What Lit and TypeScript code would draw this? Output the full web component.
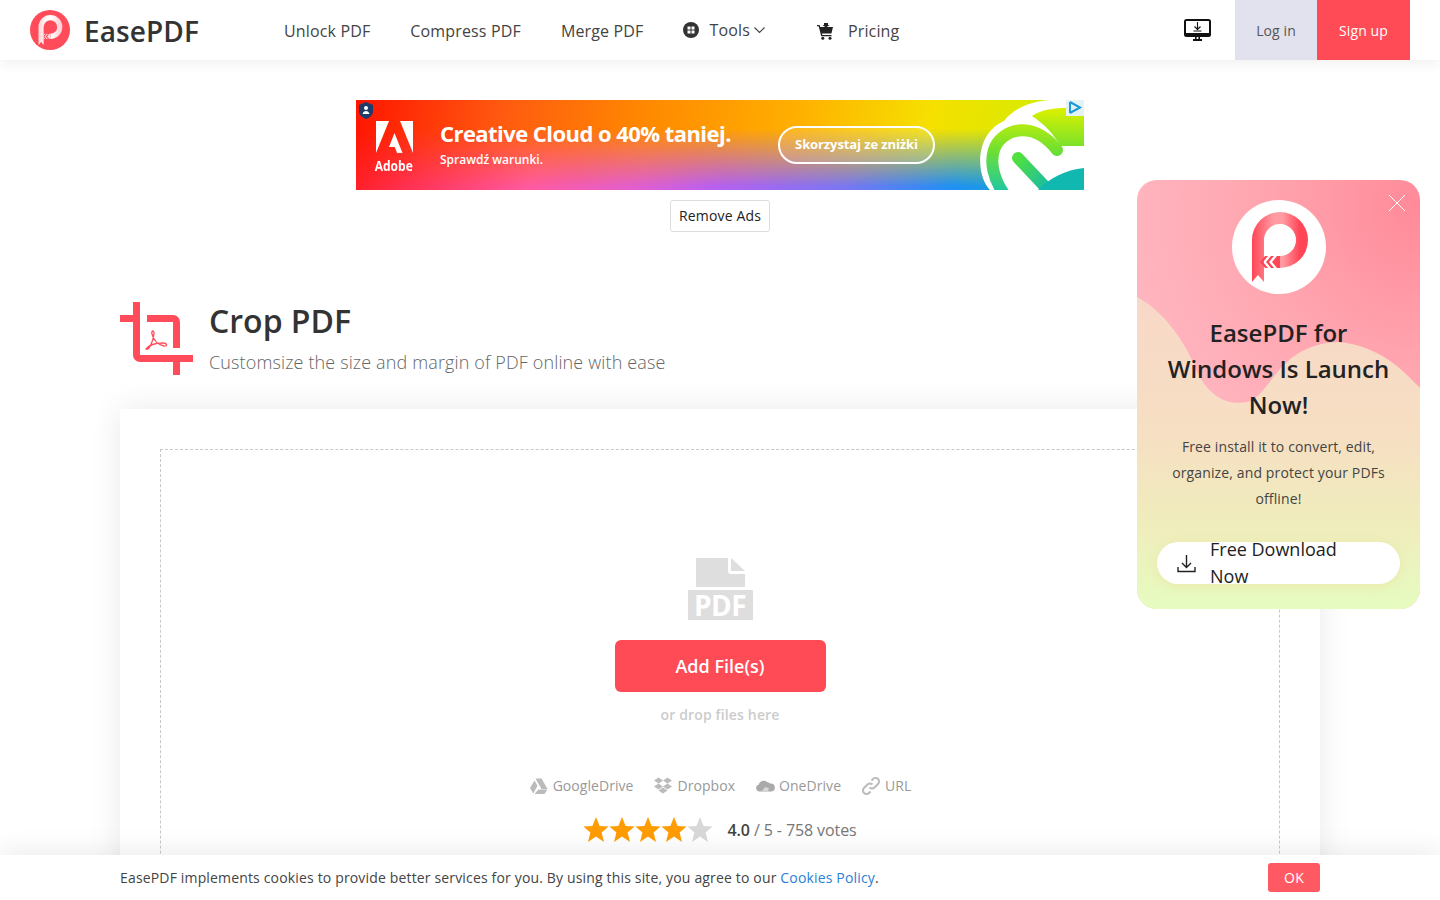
import { LitElement, css, html, svg } from 'lit';
import { customElement } from 'lit/decorators.js';

const logoMark = (id: string, light: string, dark: string) => svg`
  <defs>
    <linearGradient id=${id} x1="0" y1="0" x2="1" y2="0">
      <stop offset="0" stop-color=${dark} />
      <stop offset=".38" stop-color=${light} />
      <stop offset=".55" stop-color=${light} />
      <stop offset=".85" stop-color=${dark} />
    </linearGradient>
  </defs>
  <path fill="url(#${id})" d="M20 40A28 28 0 1 1 48 68V56A16 16 0 1 0 32 40V82L26 75L20 82Z" />
  <path fill=${dark} d="M48 56v12h-3l-5-6 5-6zM39 56l-5 6 5 6h3l-5-6 5-6zM33 56l-5 6 5 6h3l-5-6 5-6z" />
`;

const star = (color: string) => html`
  <svg class="star" viewBox="0 0 26 26"><polygon fill=${color} points="13,0 16.6,9 25.6,9.4 18.6,15.4 21,25 13,19.6 5,25 7.4,15.4 0.4,9.4 9.4,9" /></svg>
`;

@customElement('app-root')
export class AppRoot extends LitElement {
  static styles = css`
    :host {
      display: block;
      position: relative;
      height: 100vh;
      overflow: hidden;
      background: #fff;
      font-family: "Open Sans", "Liberation Sans", sans-serif;
      color: #444;
    }

    header {
      position: relative;
      z-index: 2;
      display: flex;
      align-items: center;
      height: 60px;
      padding: 0 30px;
      background: #fff;
      box-shadow: 0 2px 14px rgba(0, 0, 0, .07);
    }
    .brand { display: flex; align-items: center; gap: 14px; width: 254px; }
    .brand svg { width: 40px; height: 40px; display: block; }
    .brand span { font-size: 28px; font-weight: 600; color: #333; line-height: 40px; padding-top: 2px; letter-spacing: .1px; }
    nav { display: flex; align-items: center; font-size: 16px; letter-spacing: .15px; color: #444; flex: 1; padding-top: 2px; }
    nav a { display: flex; align-items: center; line-height: 24px; }
    nav a + a { margin-left: 40px; }
    .tools { gap: 10px; margin-top: -2px; }
    .tools svg.globe { width: 16px; height: 16px; }
    .tools span { display: flex; align-items: center; gap: 3px; }
    .tools svg.chev { width: 13px; height: 8px; }
    .pricing { margin-left: 51px !important; gap: 14px; }
    .pricing svg { width: 17px; height: 17px; }
    .monitor { width: 27px; height: 22px; margin-right: 24px; display: block; }
    .auth {
      display: flex;
      align-items: center;
      justify-content: center;
      height: 60px;
      font-size: 14px;
      letter-spacing: .1px;
    }
    .login { width: 82px; background: #e2e2ee; color: #555; }
    .signup { width: 93px; background: #ff4b55; color: #fff; }

    main { display: flex; flex-direction: column; align-items: center; padding-top: 40px; }
    .ad {
      position: relative;
      overflow: hidden;
      display: flex;
      align-items: center;
      width: 728px;
      height: 90px;
      flex: none;
      color: #fff;
      background: linear-gradient(97deg, #ff1c20 0%, #ff3050 8%, #ff5ba0 25%, #e05fd0 40%, #b860f0 50%, #7878f0 68%, #2090f4 82%, #0cb4b8 100%);
    }
    .ad::before {
      content: "";
      position: absolute;
      inset: 0;
      background: linear-gradient(97deg, #ff1500 0%, #ff5a10 20%, #ff8a00 40%, #ffb000 60%, #f6e000 78%, #c8f000 100%);
      -webkit-mask-image: linear-gradient(180deg, #000 32%, transparent 96%);
      mask-image: linear-gradient(180deg, #000 32%, transparent 96%);
    }
    .ad > * { position: relative; }
    .adobe {
      display: flex;
      flex-direction: column;
      align-items: center;
      width: 38px;
      margin: 3px 0 0 19px;
      font-size: 15px;
      font-weight: 700;
      line-height: 16px;
    }
    .adobe span { display: block; transform: scaleX(.8); }
    .adobe svg { width: 37px; height: 32px; display: block; margin-bottom: 4px; }
    .ad-copy { margin-left: 27px; width: 338px; margin-top: -2px; }
    .ad-copy b { display: block; font-size: 22px; font-weight: 700; line-height: 30px; letter-spacing: -.55px; }
    .ad-copy span { display: block; font-size: 12px; font-weight: 600; line-height: 20px; margin-top: 2px; }
    .ad-cta {
      display: flex;
      align-items: center;
      justify-content: center;
      width: 157px;
      height: 38px;
      box-sizing: border-box;
      padding-bottom: 2px;
      border: 2px solid #fff;
      border-radius: 19px;
      background: rgba(255, 255, 255, .12);
      font-size: 13px;
      font-weight: 700;
      letter-spacing: -.1px;
    }
    .ad-cloud { position: absolute; right: 0; top: 0; width: 124px; height: 90px; }
    .ad-shield { position: absolute; left: 3px; top: 2px; width: 14px; height: 17px; }
    .ad-choice { position: absolute; right: 0; top: 0; width: 18px; height: 16px; }

    .remove {
      margin-top: 10px;
      width: 100px;
      height: 32px;
      box-sizing: border-box;
      padding-bottom: 2px;
      display: flex;
      align-items: center;
      justify-content: center;
      border: 1px solid #ddd;
      border-radius: 3px;
      font-size: 14px;
      letter-spacing: .15px;
      color: #222;
    }

    .heading {
      align-self: stretch;
      display: flex;
      gap: 16px;
      margin: 70px 120px 34px;
      height: 73px;
    }
    .heading svg { width: 73px; height: 73px; flex: none; }
    h1 { margin: -1px 0 0; font-size: 32px; font-weight: 600; color: #333; line-height: 40px; }
    .heading p { margin: 9px 0 0; font-size: 18px; font-weight: 300; letter-spacing: .13px; color: #666; line-height: 24px; }

    .card {
      width: 1200px;
      box-sizing: border-box;
      padding: 40px;
      background: #fff;
      box-shadow: 0 0 30px rgba(0, 0, 0, .09);
      flex: none;
    }
    .drop {
      display: flex;
      flex-direction: column;
      align-items: center;
      height: 500px;
      padding-top: 108px;
      box-sizing: border-box;
      border: 1px dashed #c8c8c8;
    }
    .pdf { display: flex; flex-direction: column; align-items: center; width: 65px; }
    .pdf svg { width: 49px; height: 29px; display: block; margin-left: 1px; }
    .pdf span {
      display: block;
      width: 65px;
      height: 30px;
      margin-top: 3px;
      background: #dedede;
      color: #fff;
      font-size: 28px;
      font-weight: 700;
      line-height: 30px;
      text-align: center;
      letter-spacing: -.5px;
    }
    .add {
      display: flex;
      align-items: center;
      justify-content: center;
      width: 211px;
      height: 52px;
      margin-top: 20px;
      background: #ff4b55;
      border-radius: 6px;
      color: #fff;
      font-size: 18px;
      font-weight: 600;
    }
    .hint { margin-top: 12px; font-size: 14px; font-weight: 600; letter-spacing: .15px; line-height: 22px; color: #ccc; }
    .sources { display: flex; gap: 20px; margin-top: 50px; font-size: 14px; letter-spacing: .05px; line-height: 20px; color: #999; }
    .sources div { display: flex; align-items: center; gap: 4px; }
    .sources svg { width: 20px; height: 20px; display: block; }
    .rating { display: flex; align-items: center; gap: 14px; margin-top: 20px; height: 27px; font-size: 16px; letter-spacing: -.1px; color: #777; }
    .rating b { font-weight: 600; color: #444; }
    .stars { display: flex; }
    .star { width: 26px; height: 26px; display: block; }

    .cookie {
      position: absolute;
      z-index: 3;
      left: 0;
      right: 0;
      bottom: 0;
      height: 45px;
      padding: 0 120px;
      display: flex;
      align-items: center;
      justify-content: space-between;
      background: #fff;
      box-shadow: 0 0 30px rgba(0, 0, 0, .1);
      font-size: 14px;
      letter-spacing: .16px;
      color: #444;
    }
    .cookie a { color: #2b7fd4; }
    .ok {
      width: 52px;
      height: 29px;
      display: flex;
      align-items: center;
      justify-content: center;
      background: #ff5a64;
      border-radius: 3px;
      color: #fff;
    }

    .promo {
      position: absolute;
      z-index: 4;
      left: 1137px;
      top: 180px;
      width: 283px;
      height: 429px;
      box-sizing: border-box;
      padding: 20px 20px 25px;
      overflow: hidden;
      border-radius: 20px;
      display: flex;
      flex-direction: column;
      align-items: center;
      background: radial-gradient(circle 330px at 100% 6%, #ff8a99 0%, #ffa6b0 50%, #ffb9c3 100%), #fdbfc2;
    }
    .hills { position: absolute; left: 0; top: 0; width: 283px; height: 429px; }
    .close { position: absolute; right: 15px; top: 15px; width: 16px; height: 16px; }
    .promo-logo { position: relative; width: 94px; height: 94px; border-radius: 50%; background: #fff; flex: none; }
    .promo-logo svg { display: block; width: 94px; height: 94px; }
    .promo h2 {
      position: relative;
      margin: 21px 0 0;
      font-size: 24px;
      font-weight: 600;
      line-height: 36px;
      text-align: center;
      color: #222;
    }
    .promo p {
      position: relative;
      margin: 11px 0 0;
      font-size: 14px;
      letter-spacing: .13px;
      line-height: 26px;
      text-align: center;
      color: #444;
    }
    .dl {
      position: relative;
      align-self: stretch;
      display: flex;
      align-items: center;
      gap: 14px;
      height: 42px;
      margin-top: 30px;
      padding-left: 20px;
      border-radius: 21px;
      background: #fff;
      box-shadow: 0 2px 10px rgba(240, 220, 150, .5);
      font-size: 18px;
      line-height: 27px;
      color: #222;
    }
    .dl svg { width: 19px; height: 19px; flex: none; }
    .dl span { width: 150px; flex: none; }
  `;

  render() {
    return html`
      <header>
        <div class="brand">
          <svg viewBox="0 0 94 94">
            <circle cx="47" cy="47" r="47" fill="#ff4b5a" />
            ${logoMark('hdr', '#ffffff', '#ffd5d8')}
          </svg>
          <span>EasePDF</span>
        </div>
        <nav>
          <a>Unlock PDF</a>
          <a>Compress PDF</a>
          <a>Merge PDF</a>
          <a class="tools">
            <svg class="globe" viewBox="0 0 16 16">
              <circle cx="8" cy="8" r="8" fill="#333" />
              <path d="M4.5 4.5h3v3h-3zM8.5 4.5h3v3h-3zM4.5 8.5h3v3h-3zM8.5 8.5h3v3h-3z" fill="#fff" />
            </svg>
            <span>Tools
              <svg class="chev" viewBox="0 0 12 8"><path d="M1 1.5l5 5 5-5" fill="none" stroke="#444" stroke-width="1.2" /></svg>
            </span>
          </a>
          <a class="pricing">
            <svg viewBox="0 0 17 17">
              <path fill="#222" d="M0 2h2.6l.7 2H16l-1.6 6.5H5l.3 1.4h9.2v1.3H4.2L1.7 3.3H0z" />
              <path fill="#222" d="M7 0h4v2h1.6L9 4.6 5.4 2H7z" />
              <circle cx="5.8" cy="15.2" r="1.5" fill="#222" />
              <circle cx="13" cy="15.2" r="1.5" fill="#222" />
            </svg>
            Pricing
          </a>
        </nav>
        <svg class="monitor" viewBox="0 0 27 22">
          <rect x="1" y="1" width="25" height="16" rx="1.5" fill="#fff" stroke="#111" stroke-width="2" />
          <rect x="1" y="14" width="25" height="3" fill="#111" />
          <path d="M13.5 3v7M10.5 7.5l3 3 3-3M9.5 12h8" fill="none" stroke="#111" stroke-width="1.1" />
          <path d="M11 17h1.6v3h1.8v-3H16v3h2v2H9v-2h2z" fill="#111" />
        </svg>
        <div class="auth login">Log in</div>
        <div class="auth signup">Sign up</div>
      </header>

      <main>
        <div class="ad">
          <div class="adobe">
            <svg viewBox="0 0 37 32">
              <path fill="#fff" d="M0 0h13L0 32zM24 0h13v32zM18.5 12l8 20h-5.400l-2.300-6h-5.800z" />
            </svg>
            <span>Adobe</span>
          </div>
          <div class="ad-copy">
            <b>Creative Cloud o 40% taniej.</b>
            <span>Sprawdź warunki.</span>
          </div>
          <div class="ad-cta">Skorzystaj ze zniżki</div>
          <svg class="ad-cloud" viewBox="0 0 124 90">
            <defs>
              <linearGradient id="band" gradientUnits="userSpaceOnUse" x1="0" y1="10" x2="0" y2="90">
                <stop offset="0" stop-color="#d8f000" />
                <stop offset=".5" stop-color="#70e030" />
                <stop offset="1" stop-color="#20c8a0" />
              </linearGradient>
              <linearGradient id="slot" x1="0" y1="0" x2="1" y2="1">
                <stop offset="0" stop-color="#50e040" />
                <stop offset="1" stop-color="#10b4b8" />
              </linearGradient>
            </defs>
            <path fill="#fff" d="M30 90C16 76 14 34 44 21C56 4 84 -2 106 0H124V90Z" />
            <path fill="url(#band)" d="M72 16C84 8 100 7 124 8V46H100C94 34 84 24 72 16Z" />
            <path fill="none" stroke="url(#band)" stroke-width="12" stroke-linecap="round" d="M44 94C33 78 30 62 34 50C40 30 72 18 97 50" />
            <path fill="none" stroke="url(#slot)" stroke-width="12" stroke-linecap="round" d="M58 58L92 94" />
            <path fill="#10b8b0" d="M78 90C90 78 105 70 124 68V90Z" />
          </svg>
          <svg class="ad-shield" viewBox="0 0 14 17">
            <path fill="#1c3c6c" d="M7 0l7 3v6c0 4-3 6.500-7 8-4-1.500-7-4-7-8V3z" />
            <circle cx="7" cy="6" r="2" fill="#fff" />
            <path d="M3.500 12c.5-2 2-3 3.500-3s3 1 3.500 3z" fill="#fff" />
          </svg>
          <svg class="ad-choice" viewBox="0 0 18 16">
            <rect width="18" height="16" fill="#e4f2f4" />
            <path d="M4 2v11M4 2l10 5.500L4 13" fill="none" stroke="#1a9ad8" stroke-width="2" />
          </svg>
        </div>
        <div class="remove">Remove Ads</div>

        <section class="heading">
          <svg viewBox="0 0 73 73">
            <path fill="none" stroke="#ff4b5a" stroke-width="7" d="M0 16.500H13M16.500 0V53A3.500 3.500 0 0 0 20 56.500H73M27 16.500H53A3.500 3.500 0 0 1 56.500 20V46M56.500 60V73" />
            <path fill="none" stroke="#ff4b5a" stroke-width="1.300" d="M26 47c3 2 7-8 8-15 .5-4-3-4-2 0 1.500 6 6 11 12 12 4 .5 3-3-1-3-7 0-14 2-17 6z" />
          </svg>
          <div>
            <h1>Crop PDF</h1>
            <p>Customsize the size and margin of PDF online with ease</p>
          </div>
        </section>

        <section class="card">
          <div class="drop">
            <div class="pdf">
              <svg viewBox="0 0 49 29">
                <path fill="#dedede" d="M0 0h32v13a3 3 0 0 0 3 3h14v13H0z" />
                <path fill="#dedede" d="M35 0l14 13H35z" />
              </svg>
              <span>PDF</span>
            </div>
            <div class="add">Add File(s)</div>
            <div class="hint">or drop files here</div>
            <div class="sources">
              <div>
                <svg viewBox="0 0 20 20"><path fill="#bbb" d="M6.500 2.500h6l6 10.500h-6zM5.500 4.500l3 5.200L4.300 17.500 1 12zM9.500 13.500h9L15.500 18H5.500z" /></svg>
                GoogleDrive
              </div>
              <div>
                <svg viewBox="0 0 20 20"><path fill="#bbb" d="M5.500 1.500L1 4.500l4.500 3L10 4.500zM14.500 1.500L10 4.500l4.500 3 4.500-3zM5.500 7.500L1 10.500l4.500 3 4.500-3zM14.500 7.500L10 10.500l4.500 3 4.500-3zM5.500 14.500l4.500 3 4.500-3L10 11.500z" /></svg>
                Dropbox
              </div>
              <div>
                <svg viewBox="0 0 20 20"><path fill="#aaa" d="M4.500 15.500a3.500 3.500 0 0 1-.7-6.900A5 5 0 0 1 12 6a4.500 4.500 0 0 1 3 1.500 4 4 0 0 1 1.500 8z" /><path fill="#fff" d="M7 15l3-4 4 1-1 3z" opacity=".5" /></svg>
                OneDrive
              </div>
              <div>
                <svg viewBox="0 0 20 20"><path fill="none" stroke="#bbb" stroke-width="2" d="M8.500 11.500a3.500 3.500 0 0 0 5 0l3.500-3.500a3.500 3.500 0 0 0-5-5L10.500 4.500M11.500 8.500a3.500 3.500 0 0 0-5 0L3 12a3.500 3.500 0 0 0 5 5l1.500-1.500" /></svg>
                URL
              </div>
            </div>
            <div class="rating">
              <div class="stars">
                ${star('#ff9c00')}${star('#ff9c00')}${star('#ff9c00')}${star('#ff9c00')}${star('#d8d8d8')}
              </div>
              <div><b>4.0</b> / 5 - 758 votes</div>
            </div>
          </div>
        </section>
      </main>

      <aside class="promo">
        <svg class="hills" viewBox="0 0 283 429">
          <defs>
            <linearGradient id="hill" x1="0" y1="0" x2="0" y2="1">
              <stop offset="0" stop-color="#f8d8c8" />
              <stop offset=".45" stop-color="#f6dfc2" />
              <stop offset=".75" stop-color="#efeebc" />
              <stop offset="1" stop-color="#e6fcc0" />
            </linearGradient>
          </defs>
          <path fill="url(#hill)" d="M0 117C25 130 48 160 60 192C72 215 88 226 110 222C135 215 140 165 200 162C245 165 270 195 283 208V429H0Z" />
        </svg>
        <svg class="close" viewBox="0 0 16 16"><path d="M0 0l16 16M16 0L0 16" stroke="#fff" stroke-width="1" /></svg>
        <div class="promo-logo">
          <svg viewBox="0 0 94 94">${logoMark('pop', '#ff9aa2', '#ff4656')}</svg>
        </div>
        <h2>EasePDF for<br />Windows Is Launch<br />Now!</h2>
        <p>Free install it to convert, edit, organize, and protect your PDFs offline!</p>
        <div class="dl">
          <svg viewBox="0 0 19 19"><path fill="none" stroke="#222" stroke-width="1.400" d="M9.500 1v12M5 9l4.500 4.500L14 9M1 13v4.500h17V13" /></svg>
          <span>Free Download Now</span>
        </div>
      </aside>

      <div class="cookie">
        <div>EasePDF implements cookies to provide better services for you. By using this site, you agree to our <a>Cookies Policy</a>.</div>
        <div class="ok">OK</div>
      </div>
    `;
  }
}
